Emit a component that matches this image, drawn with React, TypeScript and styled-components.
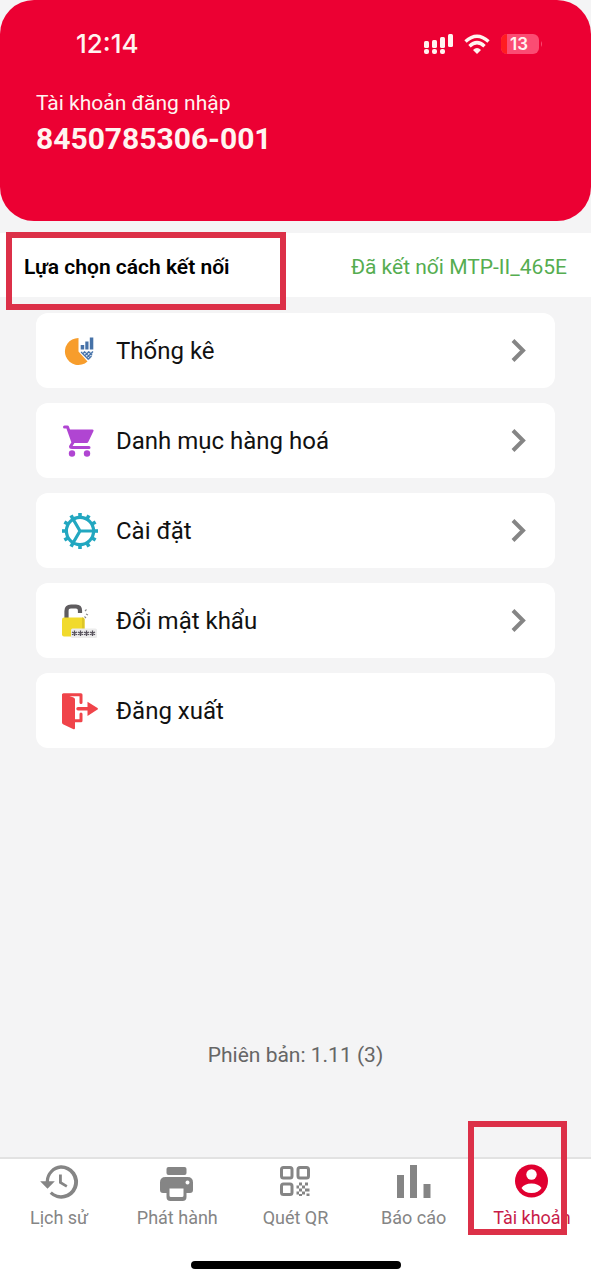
import React from "react";
import styled, { createGlobalStyle } from "styled-components";

const GlobalStyle = createGlobalStyle`
  *, *::before, *::after { box-sizing: border-box; }
  body {
    margin: 0;
    background: #f4f4f5;
    font-family: Roboto, "Noto Sans", sans-serif;
    color: #111;
  }
  button { font: inherit; color: inherit; border: 0; padding: 0; cursor: pointer; }
  a { color: inherit; text-decoration: none; }
  svg { display: block; flex: none; }
`;

const Screen = styled.div`
  display: flex;
  flex-direction: column;
  min-height: 100vh;
`;

const Header = styled.header`
  padding: 28px 36px 66px;
  border-radius: 34px;
  background: #ec0033;
  color: #fff4f0;
`;

const StatusBar = styled.div`
  display: flex;
  align-items: center;
  justify-content: space-between;
  height: 32px;
  margin-bottom: 31px;
  padding: 0 12px 0 40px;
`;

const Clock = styled.time`
  font: 500 26px/32px Inter, sans-serif;
`;

const AccountLabel = styled.p`
  margin: 0 0 8px;
  font-size: 21px;
  line-height: 24px;
`;

const AccountNumber = styled.h1`
  margin: 0;
  font-size: 30px;
  font-weight: 700;
  line-height: 32px;
`;

const Marker = styled.span<{ $inset: string; $width: number }>`
  position: absolute;
  inset: ${(p) => p.$inset};
  width: ${(p) => p.$width}px;
  border: 6px solid #dc3048;
  pointer-events: none;
`;

const Connection = styled.section`
  position: relative;
  display: flex;
  align-items: center;
  justify-content: space-between;
  min-height: 64px;
  margin-top: 12px;
  padding: 4px 24px 0;
  background: #fff;
  font-size: 21px;
  line-height: 24px;
`;

const ConnectionButton = styled.button`
  background: none;
  font-weight: 600;
  color: #000;
`;

const ConnectionState = styled.span`
  color: #55ad50;
`;

const Menu = styled.nav`
  display: flex;
  flex-direction: column;
  gap: 15px;
  padding: 16px 36px;
`;

const MenuItem = styled.button`
  display: flex;
  align-items: center;
  height: 75px;
  padding: 0 24px;
  border-radius: 12px;
  background: #fff;
  color: #111;
  font-size: 24px;
  line-height: 32px;
  text-align: left;
`;

const MenuLabel = styled.span`
  flex: 1;
  margin-left: 16px;
`;

const Version = styled.p`
  margin: auto 0 0;
  padding: 24px 0 90px;
  color: #666;
  font-size: 21px;
  line-height: 24px;
  text-align: center;
`;

const Footer = styled.footer`
  border-top: 2px solid #e2e2e2;
  background: #fff;
  padding-bottom: 12px;
`;

const Tabs = styled.nav`
  display: grid;
  grid-template-columns: repeat(5, 1fr);
`;

const Tab = styled.a<{ $active?: boolean }>`
  position: relative;
  display: flex;
  flex-direction: column;
  align-items: center;
  gap: 4px;
  padding-top: 3px;
  color: ${(p) => (p.$active ? "#e00030" : "#858585")};
  font-size: 18px;
  line-height: 24px;
  white-space: nowrap;
`;

const TabLabel = styled.span<{ $active?: boolean }>`
  color: ${(p) => (p.$active ? "#c81c48" : "inherit")};
`;

const HomeIndicator = styled.div`
  width: 210px;
  height: 8px;
  margin: 31px auto 0;
  border-radius: 4px;
  background: #000;
`;

const StatusIcons = () => (
  <svg width="120" height="24" viewBox="0 0 120 24" fill="#fff4f0" aria-hidden="true">
    <rect x="1" y="9" width="5" height="7" rx="1.5" />
    <rect x="9" y="8" width="5" height="8" rx="1.5" />
    <rect x="17" y="5" width="5" height="11" rx="1.5" />
    <rect x="25" y="2" width="5" height="13" rx="1.5" />
    <rect x="1" y="17" width="5" height="5" rx="2" />
    <rect x="9" y="17" width="5" height="5" rx="2" />
    <rect x="17" y="17" width="5" height="5" rx="2" />
    <g fill="none" stroke="#fff4f0" strokeWidth="3.400">
      <path d="M42.500 9.500Q54 -1 65.500 9.500" />
      <path d="M46.500 14.200Q54 7 61.500 14.200" />
    </g>
    <path d="M50 18Q54 14 58 18L54 22Z" />
    <rect x="78" y="2" width="38" height="20" rx="6" fill="#fb4c73" />
    <path d="M84 2a6 6 0 0 0-6 6v8a6 6 0 0 0 6 6Z" fill="#ff1c20" />
    <path d="M118 9q2 3 0 6Z" fill="#fb4c73" />
    <text x="96" y="18" textAnchor="middle" fontFamily="Inter, sans-serif" fontSize="17" fontWeight="600">13</text>
  </svg>
);

const StatsIcon = () => (
  <svg width="40" height="40" viewBox="0 0 40 40" aria-hidden="true">
    <path d="M18.500 7V20.500L27.500 30.500A13.500 13.500 0 1 1 18.500 7Z" fill="#f79d2c" />
    <path d="M20.700 14h3.500v4.500h-3.500zM25.300 10.500h3.200v8h-3.200zM29.800 6.500h3.500v12h-3.500z" fill="#4672a8" />
    <path d="M20.500 20.500H33.300Q33 26 28.700 29.500Z" fill="#dce5f0" />
    <path d="M21 21l7.500 7.500M24.500 20.500l5.500 6M28.500 20.500l3.500 3.500M33 20.500l-6.500 6.500M29 20.500l-4.500 4.500M25 20.500l-2 2M31.500 25l-3 3" stroke="#4672a8" strokeWidth="1.100" />
  </svg>
);

const CartIcon = () => (
  <svg width="40" height="40" viewBox="0 0 40 40" fill="#b045d2" aria-hidden="true">
    <path d="M4.500 6H7.500L13 21.500L10.500 25.500Q10.500 26.500 12 26.500H29" fill="none" stroke="#b045d2" strokeWidth="3" strokeLinejoin="round" strokeLinecap="round" />
    <path d="M8.500 8.500H32.500Q34 8.500 33.500 10L28.500 20.500Q28 22 26.500 22H12.500Z" />
    <circle cx="12" cy="32.500" r="3.200" />
    <circle cx="27" cy="32.500" r="3.200" />
  </svg>
);

const GEAR_TEETH = Array.from({ length: 12 }, (_, i) => i * 30);

const GearIcon = () => (
  <svg width="40" height="40" viewBox="0 0 40 40" aria-hidden="true">
    <g transform="translate(20 20)" fill="none" stroke="#22a7c0" strokeWidth="3.200">
      <circle r="13.600" />
      <path d="M0 0H13M0 0L-7 -12M0 0L-7 12" />
      {GEAR_TEETH.map((angle) => (
        <path key={angle} d="M0 -14V-18" strokeWidth="3.600" transform={`rotate(${angle})`} />
      ))}
    </g>
  </svg>
);

const LockIcon = () => (
  <svg width="40" height="40" viewBox="0 0 40 40" aria-hidden="true">
    <path d="M6.500 17V10Q6.500 5.500 11 5.500H16Q20 5.500 20 9.500V12" fill="none" stroke="#5f5c5f" strokeWidth="4.200" />
    <rect x="2" y="16.500" width="22.500" height="19" rx="2" fill="#f1da2c" />
    <path d="M22 31V16.500h.5a2 2 0 0 1 2 2V31Z" fill="#ddc629" />
    <path d="M25 10l1.500-1.500M26 13l2 1M24.500 15.500l1.500 1.500" stroke="#888" strokeWidth="1.100" />
    <rect x="11" y="27.500" width="26" height="9.500" rx="1.500" fill="#ececec" />
    <g stroke="#55505a" strokeWidth="1.300">
      {[14.5, 20.5, 26.5, 32.5].map((x) => (
        <path key={x} d={`M${x} 29.500v5.600M${x - 2.5} 31l5 2.800M${x + 2.5} 31l-5 2.800`} />
      ))}
    </g>
  </svg>
);

const LogoutIcon = () => (
  <svg width="40" height="40" viewBox="0 0 40 40" aria-hidden="true">
    <path d="M3.500 3.800H21V11.500M21 23V29.800H14" fill="none" stroke="#f0444a" strokeWidth="3" strokeLinejoin="round" strokeLinecap="round" />
    <path d="M2 4Q2 2.500 4 3L13.500 6.500Q15 7 15 8.500V37Q15 39 13 38L3.500 33.500Q2 33 2 31.500Z" fill="#f0444a" />
    <path d="M18 17.700H29" stroke="#f0444a" strokeWidth="3.400" strokeLinecap="round" />
    <path d="M27.500 10.800L37.500 17Q38.500 17.700 37.500 18.400L27.500 25Z" fill="#f0444a" />
  </svg>
);

const Chevron = () => (
  <svg width="24" height="28" viewBox="0 0 24 28" fill="none" stroke="#858585" strokeWidth="4" aria-hidden="true">
    <path d="M6 3.500L16 13.500L6 23.500" />
  </svg>
);

const HistoryIcon = () => (
  <svg width="40" height="40" viewBox="0 0 24 24" fill="currentColor" aria-hidden="true">
    <path d="M13 2a10 10 0 0 0-9 9.500H.7l4.400 4.600L9.500 11.500H6A7.600 7.600 0 0 1 13 4.100a7.900 7.900 0 1 1-5.300 13.600l-1.300 1.400A10 10 0 1 0 13 2Z" />
    <path d="M12 7.500v5.200l4.300 2.600.8-1.400-3.400-2V7.500Z" />
  </svg>
);

const PrintIcon = () => (
  <svg width="40" height="40" viewBox="0 0 40 40" fill="currentColor" aria-hidden="true">
    <rect x="9.500" y="5" width="20" height="8" rx="2" />
    <path fillRule="evenodd" d="M8.500 15H30.500Q36 15 36 20.500V28Q36 31 33 31H29.500V35Q29.500 39 25.500 39H13.500Q9.500 39 9.500 35V31H6Q3 31 3 28V20.500Q3 15 8.500 15ZM12.500 26.500V33.500Q12.500 35 14 35H25Q26.500 35 26.500 33.500V26.500ZM30.500 18.500a2 2 0 1 0 .01 0Z" />
  </svg>
);

const QrIcon = () => (
  <svg width="40" height="40" viewBox="0 0 40 40" fill="currentColor" aria-hidden="true">
    <g fill="none" stroke="currentColor" strokeWidth="3">
      <rect x="6.500" y="5.500" width="10.500" height="10.500" rx="2" />
      <rect x="23" y="5.500" width="10.500" height="10.500" rx="2" />
      <rect x="6.500" y="22" width="10.500" height="10.500" rx="2" />
    </g>
    <path d="M24 20.500h3v3h-3zM30 20.500h3v3h-3zM21.500 23.500H24v3h-2.500zM27 23.500h3v3h-3zM24 26.500h3v3h-3zM30 26.500h4.500v3H30zM21.500 29.500H24v3h-2.500zM27 29.500h3v3h-3zM24 32h3v2h-3zM31.500 31.500h3v2.500h-3z" />
  </svg>
);

const ReportIcon = () => (
  <svg width="40" height="40" viewBox="0 0 40 40" fill="currentColor" aria-hidden="true">
    <path d="M3 13h7v23h-7zM16 3h7v33h-7zM29.500 22h7v14h-7z" />
  </svg>
);

const AccountIcon = () => (
  <svg width="40" height="40" viewBox="0 0 40 40" aria-hidden="true">
    <circle cx="19.500" cy="19" r="16.500" fill="currentColor" />
    <circle cx="19.500" cy="12.500" r="5.200" fill="#fff" />
    <path d="M9.500 26Q12.500 21.500 19.500 21.500T29.500 26Q26.500 31 19.500 31T9.500 26Z" fill="#fff" />
  </svg>
);

const MENU = [
  { label: "Thống kê", Icon: StatsIcon, arrow: true },
  { label: "Danh mục hàng hoá", Icon: CartIcon, arrow: true },
  { label: "Cài đặt", Icon: GearIcon, arrow: true },
  { label: "Đổi mật khẩu", Icon: LockIcon, arrow: true },
  { label: "Đăng xuất", Icon: LogoutIcon, arrow: false },
];

const TABS = [
  { label: "Lịch sử", Icon: HistoryIcon },
  { label: "Phát hành", Icon: PrintIcon },
  { label: "Quét QR", Icon: QrIcon },
  { label: "Báo cáo", Icon: ReportIcon },
  { label: "Tài khoản", Icon: AccountIcon, active: true },
];

export default function App() {
  return (
    <Screen>
      <GlobalStyle />
      <Header>
        <StatusBar>
          <Clock>12:14</Clock>
          <StatusIcons />
        </StatusBar>
        <AccountLabel>Tài khoản đăng nhập</AccountLabel>
        <AccountNumber>8450785306-001</AccountNumber>
      </Header>
      <Connection>
        <ConnectionButton type="button">Lựa chọn cách kết nối</ConnectionButton>
        <ConnectionState>Đã kết nối MTP-II_465E</ConnectionState>
        <Marker $inset="-1px auto -13px 6px" $width={280} />
      </Connection>
      <Menu>
        {MENU.map(({ label, Icon, arrow }) => (
          <MenuItem key={label} type="button">
            <Icon />
            <MenuLabel>{label}</MenuLabel>
            {arrow && <Chevron />}
          </MenuItem>
        ))}
      </Menu>
      <Version>Phiên bản: 1.11 (3)</Version>
      <Footer>
        <Tabs>
          {TABS.map(({ label, Icon, active }) => (
            <Tab key={label} href="#" $active={active} aria-current={active ? "page" : undefined}>
              <Icon />
              <TabLabel $active={active}>{label}</TabLabel>
              {active && <Marker $inset="-38px 24px -5px auto" $width={99} />}
            </Tab>
          ))}
        </Tabs>
        <HomeIndicator />
      </Footer>
    </Screen>
  );
}
